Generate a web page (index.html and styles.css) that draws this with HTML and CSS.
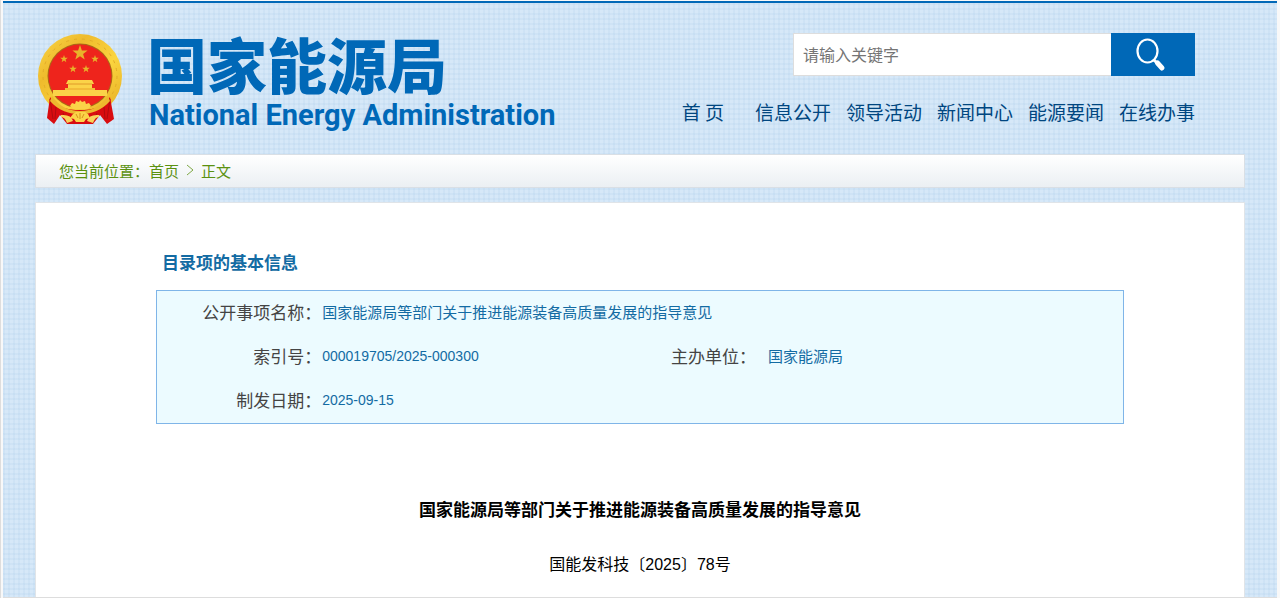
FILE: index.html
```html
<!DOCTYPE html>
<html lang="zh-CN">
<head>
    <meta charset="UTF-8">
    <meta name="viewport" content="width=device-width, initial-scale=1.0">
    <title>国家能源局</title>
    <link rel="stylesheet" href="styles.css">
</head>
<body>
    <div class="page">
        <header class="header">
            <a class="logo" href="#">
                <svg class="emblem" viewBox="0 0 86 92" aria-hidden="true">
                    <defs>
                        <linearGradient id="gold" x1="0" y1="0" x2="1" y2="1">
                            <stop offset="0" stop-color="#f9d84a"/>
                            <stop offset="0.3" stop-color="#efbb2c"/>
                            <stop offset="0.6" stop-color="#fbd53f"/>
                            <stop offset="1" stop-color="#e3a81f"/>
                        </linearGradient>
                        <path id="star" d="M0-8 1.9-2.5 7.6-2.5 3.1 1 4.7 6.5 0 3.2-4.7 6.5-3.1 1-7.6-2.5-1.9-2.5Z"/>
                    </defs>
                    <circle cx="43" cy="43" r="42" fill="url(#gold)"/>
                    <circle cx="43" cy="43" r="37" fill="none" stroke="#e3ac27" stroke-width="1" stroke-dasharray="3 5"/>
                    <circle cx="43" cy="43" r="32.5" fill="#a96a16"/>
                    <circle cx="43" cy="43" r="31.5" fill="#ee241c"/>
                    <g fill="#e8b32a">
                        <use href="#star" x="43" y="20"/>
                        <use href="#star" transform="translate(27 26) scale(.5)"/>
                        <use href="#star" transform="translate(58 26) scale(.5)"/>
                        <use href="#star" transform="translate(36 36) scale(.5)"/>
                        <use href="#star" transform="translate(49 36) scale(.5)"/>
                    </g>
                    <g fill="#fbd348">
                        <path d="M31 47h24l2 4h-2v4H31v-4h-2z"/>
                        <path d="M16 57h12v-2h30v2h12v6H16z"/>
                        <path d="M31 51h24" stroke="#e09a28" stroke-width="1"/>
                        <path d="M28 56h30" stroke="#e9a42a" stroke-width="1"/>
                    </g>
                    <path d="M13 64C20 75 31 77 43 77S66 75 73 64L77 86 70 91 63 82 56 91H30L23 82 17 91 10 85Z" fill="#d90c10"/>
                    <path d="M13 66 16 86M19 74 18 86M73 66 70 86M67 74 68 86M26 80 30 89M60 80 56 89" stroke="#b00c0f" stroke-width="1" fill="none"/>
                    <path d="M15 63C22 73 31 78 43 78S64 73 71 63L73 68C64 78 54 81 43 81S22 78 13 68Z" fill="#edb82e"/>
                    <path d="M33 73 35 70 38 71 39 68 42 69 43 67 45 69 48 68 49 71 52 70 54 73 51 76H36Z" fill="#fbd348"/>
                    <path d="M24 82Q34 81 36 88L30 90Q28 84 24 84ZM62 82Q52 81 50 88L56 90Q58 84 62 84Z" fill="#f8d35a"/>
                    <path d="M36 81 39 79H48L51 81 53 85 49 86 47 89H39L37 86 33 85Z" fill="#fbd348"/>
                    <path d="M39 81 41 85M43 80V86M47 81 45 85" stroke="#d7901c" stroke-width="1"/>
                </svg>
                <span class="logo-text">
                    <span class="logo-cn">国家能源局</span>
                    <span class="logo-en">National Energy Administration</span>
                </span>
            </a>
            <div class="header-right">
                <form class="search">
                    <input type="text" class="search-input" placeholder="请输入关键字" aria-label="请输入关键字">
                    <button type="button" class="search-btn" aria-label="搜索">
                        <svg class="search-icon" viewBox="0 0 34 34" aria-hidden="true">
                            <ellipse cx="11.500" cy="13" rx="10" ry="11.500" fill="none" stroke="#fff" stroke-width="2.200"/>
                            <path d="M18 22 21 25" stroke="#fff" stroke-width="3"/>
                            <path d="M21.500 25 26 30" stroke="#fff" stroke-width="5" stroke-linecap="round"/>
                        </svg>
                    </button>
                </form>
                <nav class="nav">
                    <a class="nav-home" href="#">首 页</a>
                    <a href="#">信息公开</a>
                    <a href="#">领导活动</a>
                    <a href="#">新闻中心</a>
                    <a href="#">能源要闻</a>
                    <a href="#">在线办事</a>
                </nav>
            </div>
        </header>

        <div class="breadcrumb">
            <span>您当前位置：</span><a href="#">首页</a>
            <svg class="arrow" viewBox="0 0 8 12" aria-hidden="true"><path d="M1 1 7 6 1 11" fill="none" stroke="#7fa845"/></svg>
            <span>正文</span>
        </div>

        <main class="content">
            <h2 class="info-title">目录项的基本信息</h2>
            <table class="info">
                <colgroup>
                    <col class="col-label">
                    <col class="col-value">
                    <col class="col-label">
                    <col>
                </colgroup>
                <tr>
                    <th scope="row">公开事项名称：</th>
                    <td colspan="3">国家能源局等部门关于推进能源装备高质量发展的指导意见</td>
                </tr>
                <tr>
                    <th scope="row">索引号：</th>
                    <td class="num">000019705/2025-000300</td>
                    <th scope="row">主办单位：</th>
                    <td class="unit">国家能源局</td>
                </tr>
                <tr>
                    <th scope="row">制发日期：</th>
                    <td class="num" colspan="3">2025-09-15</td>
                </tr>
            </table>
            <h1 class="doc-title">国家能源局等部门关于推进能源装备高质量发展的指导意见</h1>
            <p class="doc-number">国能发科技〔2025〕78号</p>
        </main>
    </div>
</body>
</html>
```

FILE: styles.css
```css
* {
    box-sizing: border-box;
}

body {
    margin: 0;
    padding: 1px 3px 0 2px;
    border-left: 1px solid #ddd;
    background-color: #f8f8f8;
    font-family: "Liberation Sans", "Noto Sans CJK SC", sans-serif;
}

a {
    color: inherit;
    text-decoration: none;
}

.page {
    min-height: calc(100vh - 1px);
    padding: 0 32px;
    border-top: 2px solid #0068b7;
    border-bottom: 1px solid #ddd;
    background-color: #d6e8f8;
    background-image:
        repeating-linear-gradient(90deg, rgba(150, 190, 225, 0.12) 0 2px, transparent 2px 5px),
        repeating-linear-gradient(rgba(150, 190, 225, 0.12) 0 2px, transparent 2px 5px);
}

/* header */
.header {
    display: flex;
    justify-content: space-between;
    height: 151px;
    padding: 30px 50px 0 2px;
}

.logo {
    display: flex;
    gap: 24px;
    color: #0068b7;
}

.emblem {
    width: 86px;
    height: 92px;
}

.logo-text {
    display: flex;
    flex-direction: column;
    white-space: nowrap;
}

.logo-cn {
    font-family: "Noto Sans CJK SC", sans-serif;
    font-size: 60px;
    font-weight: 900;
    line-height: 60px;
}

.logo-en {
    padding: 4px 0 0 2px;
    font-family: Roboto, "Liberation Sans", sans-serif;
    font-size: 29px;
    font-weight: bold;
    line-height: 36px;
}

.header-right {
    display: flex;
    flex-direction: column;
    align-items: flex-end;
    gap: 22px;
}

.search {
    display: flex;
    height: 43px;
}

.search-input {
    width: 318px;
    padding: 0 9px 2px;
    border: 1px solid #ddd;
    border-right: none;
    background: #fff;
    font-family: "Noto Sans CJK SC", sans-serif;
    font-size: 16px;
}

.search-input::placeholder {
    color: #757575;
}

.search-btn {
    display: flex;
    align-items: center;
    justify-content: center;
    width: 84px;
    padding: 0;
    border: none;
    background: #0068b7;
    cursor: pointer;
}

.search-icon {
    width: 34px;
    height: 34px;
}

.nav {
    display: flex;
    gap: 15px;
    color: #004680;
    font-family: "Noto Sans CJK SC", sans-serif;
    font-size: 19px;
    line-height: 28px;
    white-space: nowrap;
}

.nav-home {
    margin-right: 16px;
}

/* breadcrumb */
.breadcrumb {
    display: flex;
    align-items: center;
    height: 34px;
    padding: 0 23px 2px;
    border: 1px solid #d9dfe5;
    background: linear-gradient(#fff, #ebeff3);
    color: #5b9110;
    font-size: 15px;
}

.arrow {
    width: 8px;
    height: 12px;
    margin: 0 7px;
}

/* content */
.content {
    margin-top: 14px;
    padding: 48px 120px 10px;
    min-height: calc(100vh - 203px);
    border: 1px solid #e0e4e8;
    border-bottom: none;
    background: #fff;
}

.info-title {
    margin: 0 0 13px;
    padding-left: 6px;
    color: #136ba3;
    font-size: 17px;
    line-height: 26px;
}

.info {
    width: 100%;
    table-layout: fixed;
    border: 1px solid #7fb5e8;
    border-collapse: separate;
    border-spacing: 0;
    background: #ecfbff;
}

.col-label {
    width: 17%;
}

.col-value {
    width: 28%;
}

.info th,
.info td {
    height: 44px;
    padding: 0 0 4px;
}

.info th {
    color: #444;
    font-size: 17px;
    font-weight: normal;
    text-align: right;
    white-space: nowrap;
}

.info td {
    padding-left: 1px;
    color: #136ba3;
    font-size: 15px;
}

.info .num {
    padding-bottom: 2px;
    font-size: 14px;
}

.info .unit {
    padding-left: 12px;
}

.doc-title {
    margin: 74px 0 0;
    font-size: 17px;
    line-height: 26px;
    text-align: center;
}

.doc-number {
    margin: 28px 0 0;
    font-size: 16px;
    line-height: 26px;
    text-align: center;
}
```
